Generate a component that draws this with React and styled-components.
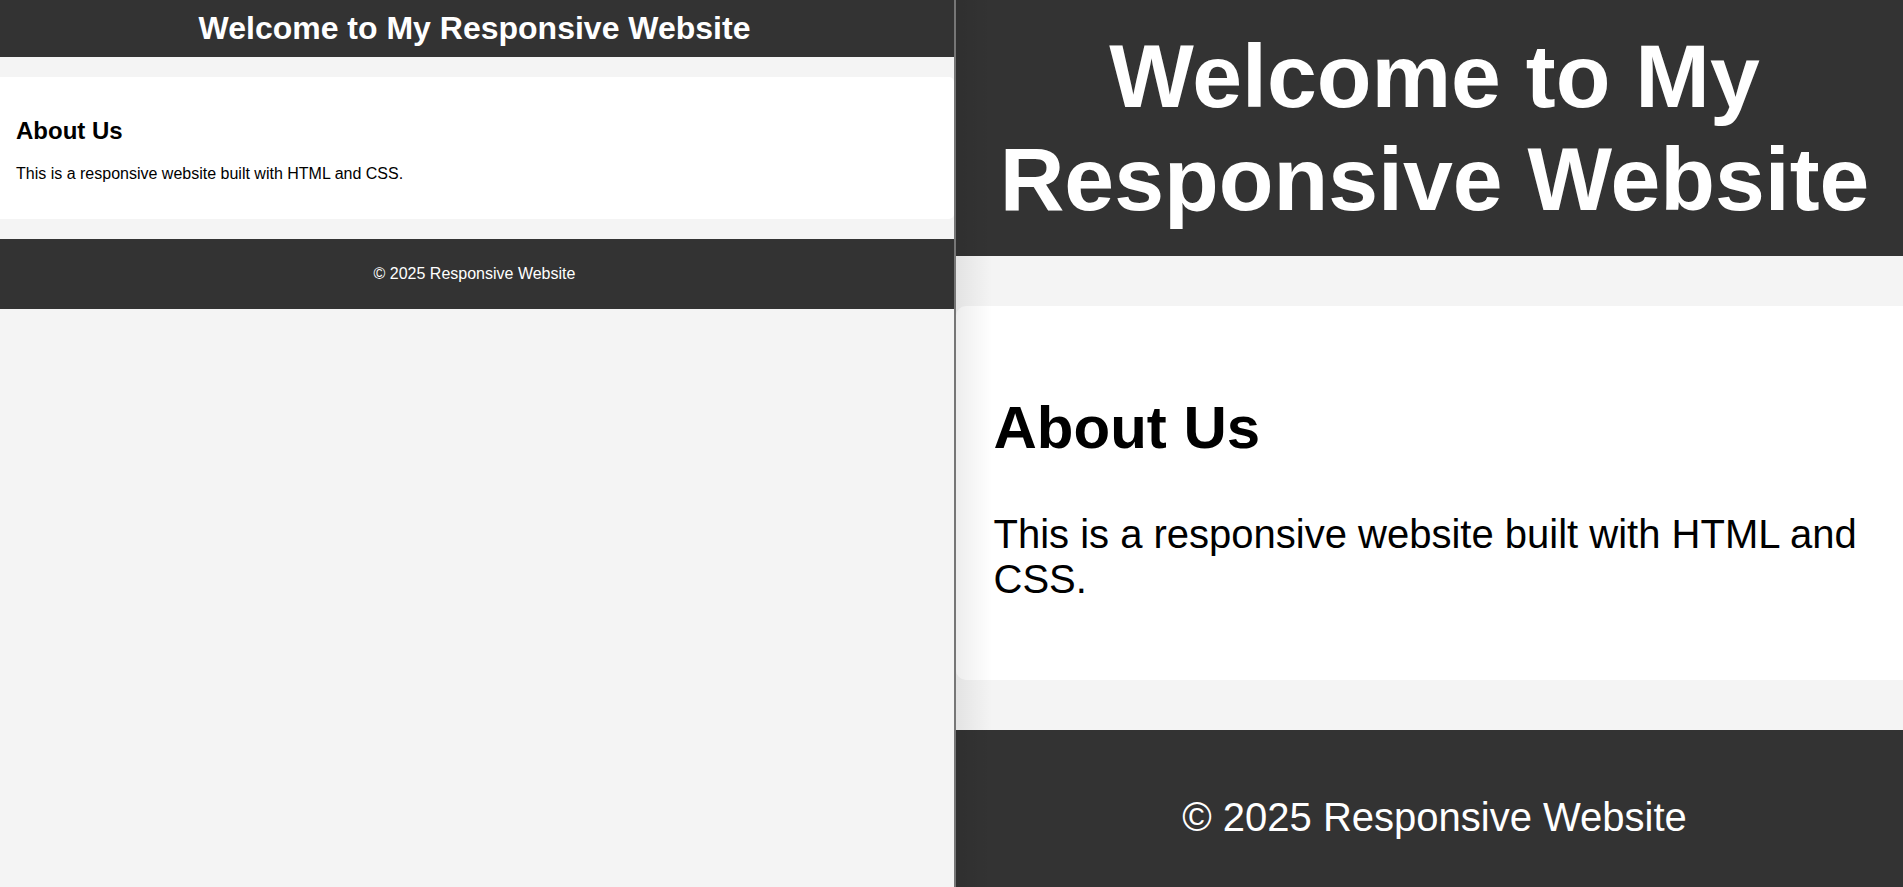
import React from 'react';
import styled, { createGlobalStyle, css } from 'styled-components';

const GlobalStyle = createGlobalStyle`
  body {
    margin: 0;
    font-family: "Liberation Sans", Arial, sans-serif;
    background: #f4f4f4;
  }
`;

const Split = styled.div`
  display: flex;
  height: 100vh;
  overflow: hidden;
  background: #f4f4f4;
`;

const Pane = styled.div`
  position: relative;
  overflow: hidden;
  ${(props) =>
    props.$mobile
      ? css`
          flex: 1;
          &::after {
            content: '';
            position: absolute;
            top: 0;
            bottom: 0;
            left: 0;
            width: 36px;
            background: linear-gradient(to right, rgba(0, 0, 0, 0.07), rgba(0, 0, 0, 0));
            pointer-events: none;
          }
        `
      : css`
          flex: 0 0 954px;
        `}
`;

const Divider = styled.div`
  flex: 0 0 2px;
  background: #767676;
`;

const Page = styled.div`
  width: ${(props) => (props.$mobile ? '957px' : '100%')};
`;

const Header = styled.header`
  background: #333;
  color: #fff;
  text-align: center;
  padding: ${(props) => (props.$mobile ? '25px 0' : '10px 5px 10px 0')};
`;

const Title = styled.h1`
  margin: 0;
  font-size: ${(props) => (props.$mobile ? '89.6px' : '32px')};
  font-weight: bold;
`;

const Section = styled.section`
  background: #fff;
  margin: ${(props) => (props.$mobile ? '50px 0' : '20px 0')};
  padding: ${(props) => (props.$mobile ? '37.5px' : '20px 16px')};
  border-radius: ${(props) => (props.$mobile ? '10px 0 0 10px' : '0 5px 5px 0')};
`;

const Heading = styled.h2`
  margin: 0.83em 0;
  font-size: ${(props) => (props.$mobile ? '60px' : '24px')};
  font-weight: bold;
`;

const Text = styled.p`
  margin: 1em 0;
  font-size: ${(props) => (props.$mobile ? '40px' : '16px')};
`;

const Footer = styled.footer`
  background: #333;
  color: #fff;
  text-align: center;
  padding: ${(props) => (props.$mobile ? '25px 0' : '10px 5px 10px 0')};
`;

function Site({ mobile }) {
  return (
    <Page $mobile={mobile}>
      <Header $mobile={mobile}>
        <Title $mobile={mobile}>Welcome to My Responsive Website</Title>
      </Header>
      <Section $mobile={mobile}>
        <Heading $mobile={mobile}>About Us</Heading>
        <Text $mobile={mobile}>This is a responsive website built with HTML and CSS.</Text>
      </Section>
      <Footer $mobile={mobile}>
        <Text $mobile={mobile}>© 2025 Responsive Website</Text>
      </Footer>
    </Page>
  );
}

export default function App() {
  return (
    <>
      <GlobalStyle />
      <Split>
        <Pane>
          <Site />
        </Pane>
        <Divider />
        <Pane $mobile>
          <Site mobile />
        </Pane>
      </Split>
    </>
  );
}
